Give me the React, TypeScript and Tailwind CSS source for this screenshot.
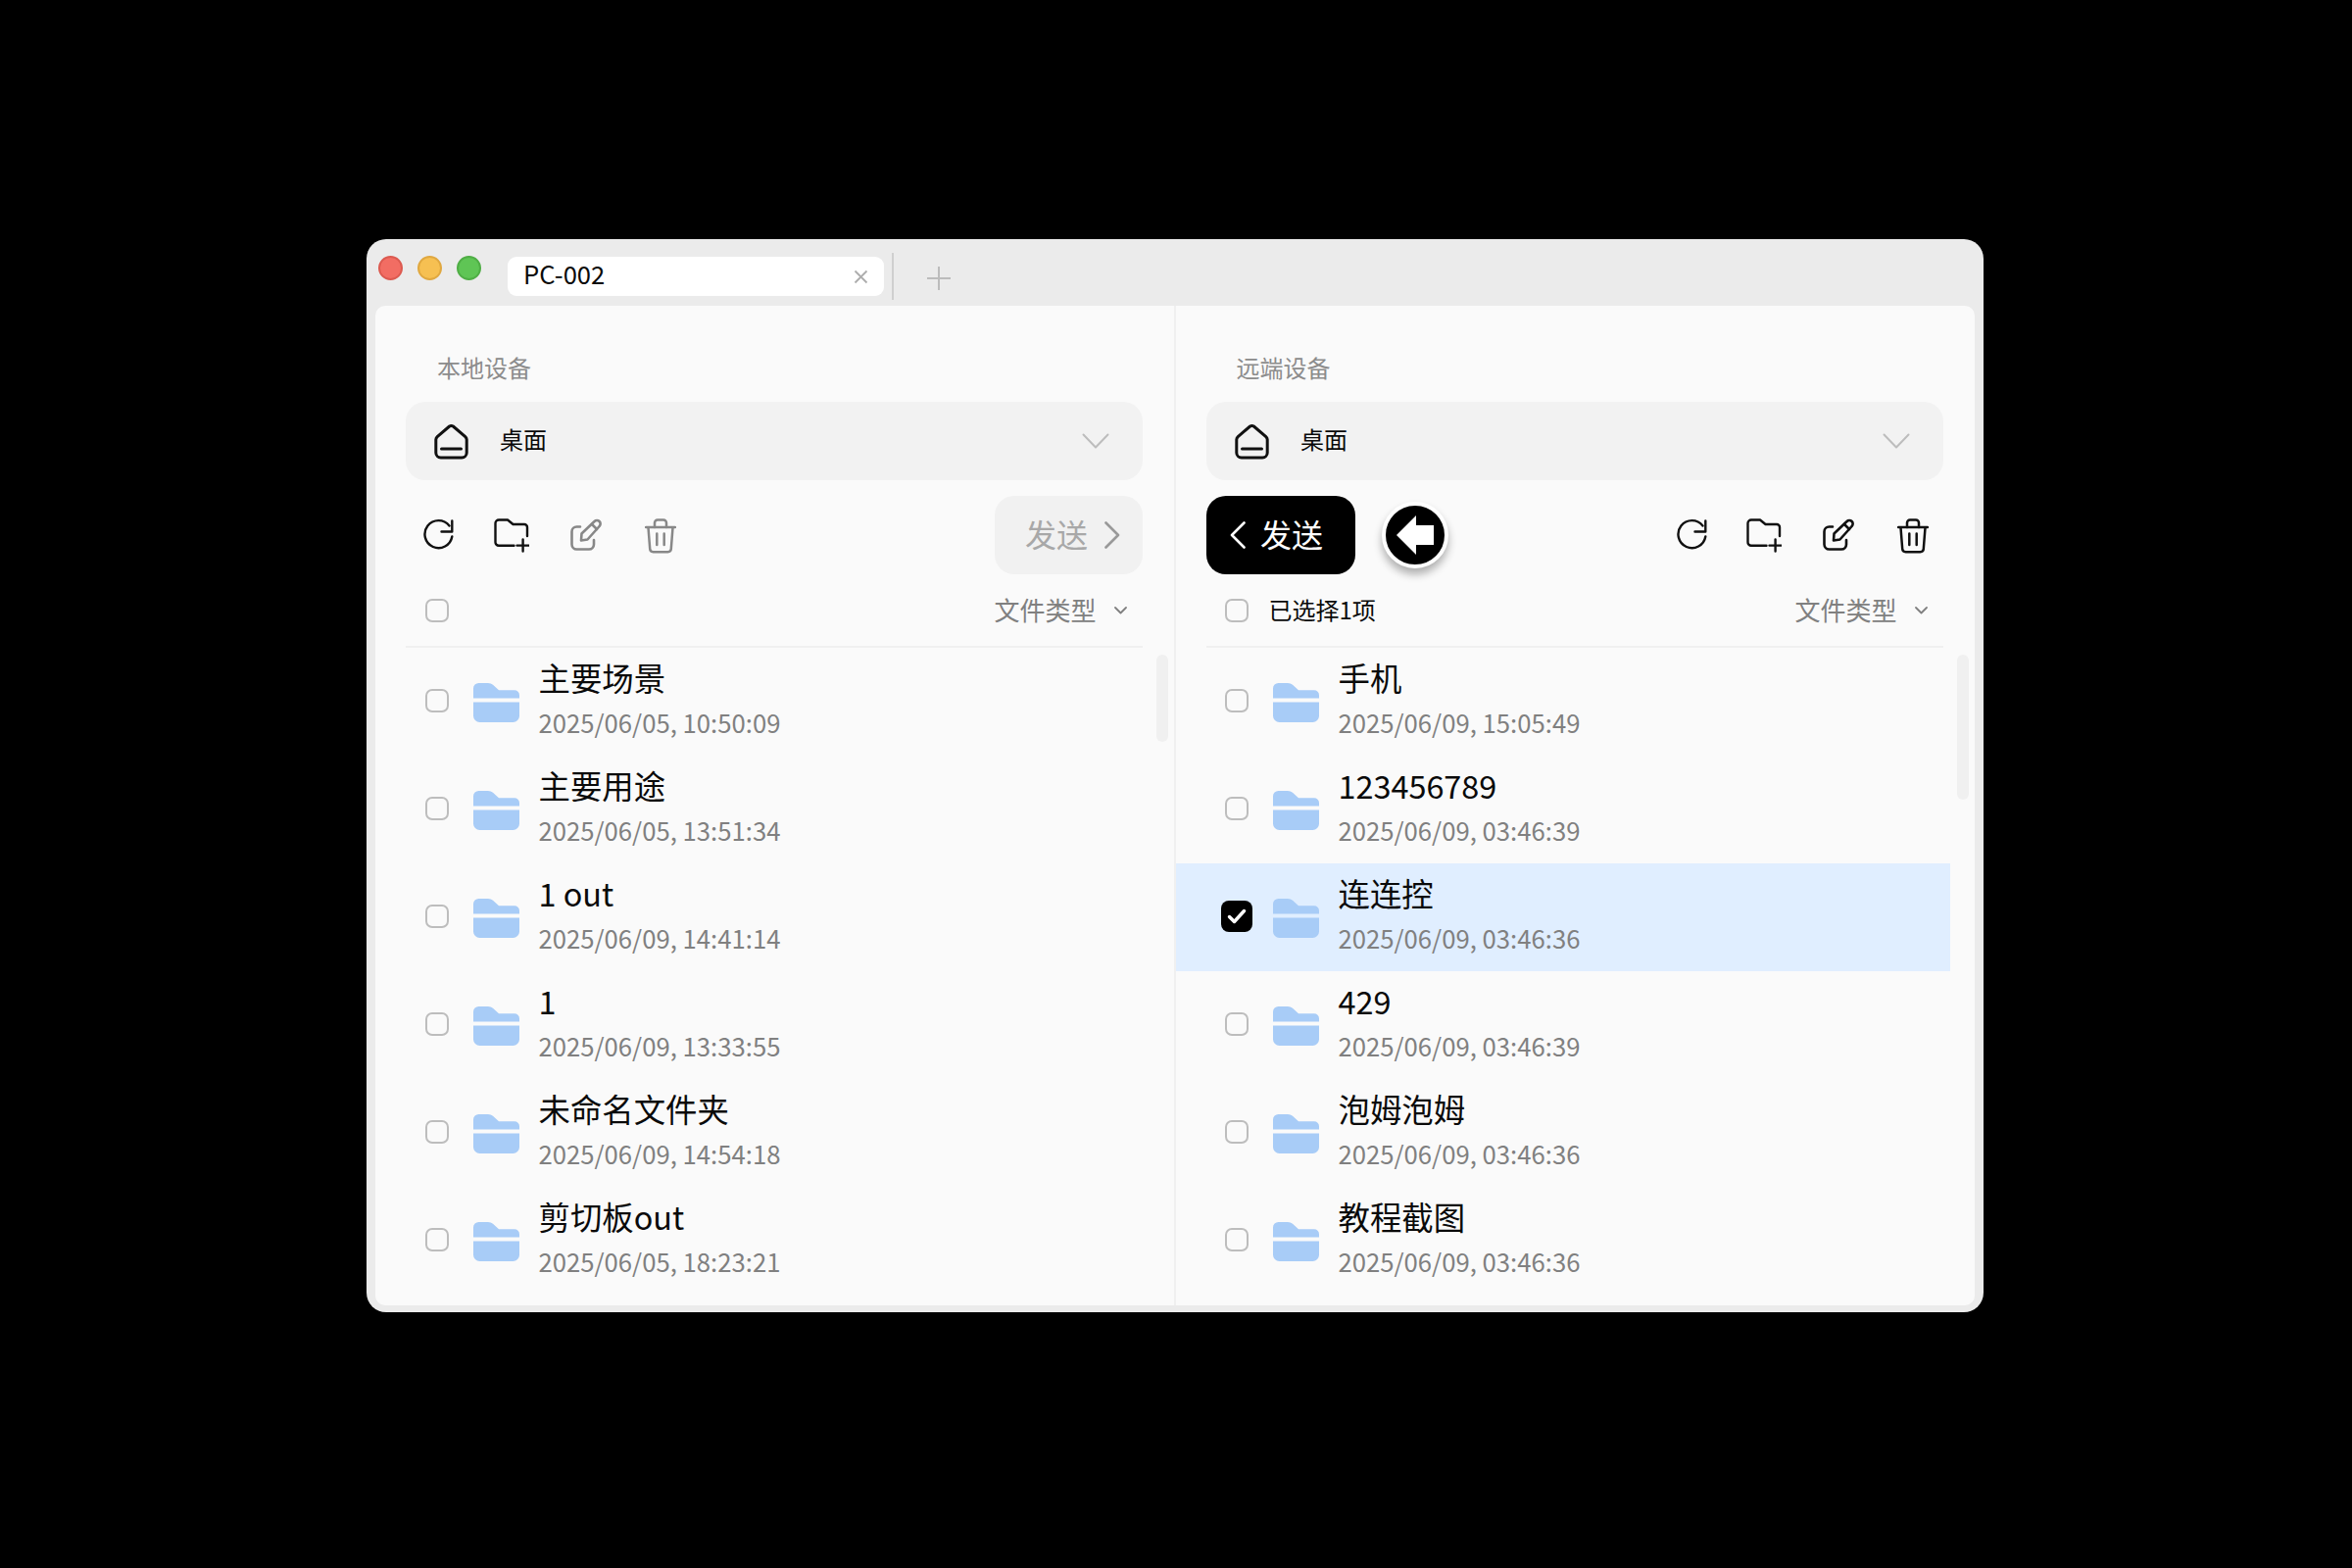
import type { ReactNode } from "react";

type FileItem = { name: string; time: string; checked?: boolean };

const localFiles: FileItem[] = [
  { name: "主要场景", time: "2025/06/05, 10:50:09" },
  { name: "主要用途", time: "2025/06/05, 13:51:34" },
  { name: "1 out", time: "2025/06/09, 14:41:14" },
  { name: "1", time: "2025/06/09, 13:33:55" },
  { name: "未命名文件夹", time: "2025/06/09, 14:54:18" },
  { name: "剪切板out", time: "2025/06/05, 18:23:21" },
];

const remoteFiles: FileItem[] = [
  { name: "手机", time: "2025/06/09, 15:05:49" },
  { name: "123456789", time: "2025/06/09, 03:46:39" },
  { name: "连连控", time: "2025/06/09, 03:46:36", checked: true },
  { name: "429", time: "2025/06/09, 03:46:39" },
  { name: "泡姆泡姆", time: "2025/06/09, 03:46:36" },
  { name: "教程截图", time: "2025/06/09, 03:46:36" },
];

const HomeIcon = () => (
  <svg width="35" height="36" viewBox="0 0 35 36" fill="none" stroke="#111" strokeWidth="3" strokeLinejoin="round" strokeLinecap="round" className="ml-[1px] mt-[1px] shrink-0">
    <path d="M1.8 15.5 Q1.8 14 3.2 12.6 L15.6 2 Q17.5 1 19.4 2 L31.8 12.6 Q33.2 14 33.2 15.5 V29 a5 5 0 0 1 -5 5 H6.8 a5 5 0 0 1 -5 -5 Z" />
    <path d="M7.5 25 H27.5" />
  </svg>
);

const RefreshIcon = ({ color }: { color: string }) => (
  <svg width="32" height="32" viewBox="0 0 32 32" fill="none" stroke={color} strokeWidth="2.4" strokeLinecap="round" strokeLinejoin="round">
    <path d="M27.5 7.5 A14 14 0 1 0 30.3 18.5" />
    <path d="M30.3 2.5 V13.5 H19.5" />
  </svg>
);

const FolderPlusIcon = ({ color }: { color: string }) => (
  <svg width="36" height="35" viewBox="0 0 36 35" fill="none" stroke={color} strokeWidth="2.4" strokeLinecap="round" strokeLinejoin="round" className="-ml-[2px]">
    <path d="M34 18 V9 a3 3 0 0 0 -3 -3 H19.5 L14 1.5 H5 a3.5 3.5 0 0 0 -3.5 3.5 V24 a3.5 3.5 0 0 0 3.5 3.8 H20.5" />
    <path d="M29.6 21.5 V33.5 M23.5 27.6 H35.5" />
  </svg>
);

const EditIcon = ({ color }: { color: string }) => (
  <svg width="33" height="33" viewBox="0 0 33 33" fill="none" stroke={color} strokeWidth="2.6" strokeLinecap="round" strokeLinejoin="round">
    <path d="M10 8.5 H6.5 a5 5 0 0 0 -5 5 V26.5 a5 5 0 0 0 5 5 H19 a5 5 0 0 0 5 -5 V22" />
    <path d="M11 22.5 L11.5 15.5 L24.6 3 a3.5 3.5 0 0 1 5 0 a3.5 3.5 0 0 1 0 5 L17.5 21.5 Z" />
    <path d="M22 6 L27 11" />
  </svg>
);

const TrashIcon = ({ color }: { color: string }) => (
  <svg width="32" height="36" viewBox="0 0 32 36" fill="none" stroke={color} strokeWidth="2.5" strokeLinecap="round" strokeLinejoin="round">
    <path d="M1 9 H31" />
    <path d="M10 9 V4.5 a3 3 0 0 1 3 -3 H19 a3 3 0 0 1 3 3 V9" />
    <path d="M3.5 9.5 L5.2 31 a3.4 3.4 0 0 0 3.4 3.2 H23.4 a3.4 3.4 0 0 0 3.4 -3.2 L28.5 9.5" />
    <path d="M12.3 15.5 V27 M19.7 15.5 V27" />
  </svg>
);

const FolderIcon = () => (
  <svg width="47" height="40" viewBox="0 0 47 40" fill="#a8ccf7" className="shrink-0">
    <path d="M0 15.4 V5.5 a5.5 5.5 0 0 1 5.5 -5.5 H15 q3 0 5 1.8 L26 7.2 H42 a5 5 0 0 1 5 5 V15.4 Z" />
    <path d="M0 19.6 H47 V33.5 a6.5 6.5 0 0 1 -6.5 6.5 H6.5 a6.5 6.5 0 0 1 -6.5 -6.5 Z" />
  </svg>
);

const Chevron = ({ dir, color }: { dir: "left" | "right"; color: string }) => (
  <svg width="16" height="28" viewBox="0 0 16 28" fill="none" stroke={color} strokeWidth="2.6" strokeLinecap="round" strokeLinejoin="round">
    <path d={dir === "left" ? "M14.5 1.5 L2 14 L14.5 26.5" : "M1.5 1.5 L14 14 L1.5 26.5"} />
  </svg>
);

const Checkbox = ({ checked }: { checked?: boolean }) => (
  <div className="w-[32px] h-[32px] flex items-center justify-center shrink-0">
    {checked ? (
      <div className="w-[32px] h-[32px] rounded-[8px] bg-black flex items-center justify-center">
        <svg width="20" height="16" viewBox="0 0 20 16" fill="none" stroke="#fff" strokeWidth="3.4" strokeLinecap="round" strokeLinejoin="round">
          <path d="M2.5 8.5 L7.5 13.5 L17.5 2.5" />
        </svg>
      </div>
    ) : (
      <div className="w-[24px] h-[24px] rounded-[7px] border-2 border-[#bdbdbd]"></div>
    )}
  </div>
);

const FileRow = ({ file, remote }: { file: FileItem; remote?: boolean }) => (
  <div className={`h-[110px] w-[790px] flex items-center ${remote ? "pl-[45.5px]" : "pl-[47px]"} ${file.checked ? "bg-[#e0eeff]" : ""}`}>
    <div className="mb-[2px]">
      <Checkbox checked={file.checked} />
    </div>
    <div className="ml-[21px] mt-[1px]">
      <FolderIcon />
    </div>
    <div className={`h-[110px] ${remote ? "ml-[20px]" : "ml-[19.5px]"}`}>
      <div className="pt-[7.5px] text-[32.4px] leading-[44px] text-[#0a0a0a]">{file.name}</div>
      <div className="mt-[8px] text-[25.7px] leading-[32px] text-[#808080]">{file.time}</div>
    </div>
  </div>
);

const SendButton = ({ active }: { active?: boolean }) =>
  active ? (
    <div className="w-[152px] h-[80px] rounded-[20px] bg-black text-white flex items-center pl-[24px] gap-[15px] text-[32px]">
      <Chevron dir="left" color="#fff" />
      <span className="-mt-[4px]">发送</span>
    </div>
  ) : (
    <div className="w-[151px] h-[80px] rounded-[20px] bg-[#f1f1f1] text-[#a8a8a8] flex items-center pl-[31px] gap-[17px] text-[32px]">
      <span className="-mt-[4px]">发送</span>
      <Chevron dir="right" color="#999" />
    </div>
  );

const ToolIcons = ({ readonly }: { readonly?: boolean }) => {
  const secondary = readonly ? "#888" : "#111";
  return (
    <div className={`flex gap-[9.5px] mt-[1px] ${readonly ? "" : "-mr-[2px]"}`}>
      {[
        <RefreshIcon color="#111" />,
        <FolderPlusIcon color="#111" />,
        <EditIcon color={secondary} />,
        <TrashIcon color={secondary} />,
      ].map((icon: ReactNode, i) => (
        <div key={i} className="w-[66px] flex justify-center">
          {icon}
        </div>
      ))}
    </div>
  );
};

const Panel = ({
  title,
  files,
  remote,
  scrollHeight,
}: {
  title: string;
  files: FileItem[];
  remote?: boolean;
  scrollHeight: string;
}) => (
  <div className="w-[815px] h-full relative">
    <div className="pl-[31px] w-[783px]">
      <div className={`h-[98px] pt-[47px] text-[24px] leading-[32px] text-[#8c8c8c] ${remote ? "pl-[30.5px]" : "pl-[32px]"}`}>{title}</div>
      <div className="h-[80px] rounded-[20px] bg-[#f2f2f2] flex items-center pl-[28px] pr-[34px]">
        <HomeIcon />
        <span className="ml-[32px] text-[24px] text-[#0a0a0a] -mt-[4px]">桌面</span>
        <svg width="28" height="16" viewBox="0 0 28 16" fill="none" stroke="#bdbdbd" strokeWidth="2" className="ml-auto" strokeLinecap="round" strokeLinejoin="round">
          <path d="M1.5 1.5 L14 14.5 L26.5 1.5" />
        </svg>
      </div>
      <div className="mt-[16px] h-[80px] flex items-center justify-between">
        {remote ? (
          <>
            <div className="flex items-center">
              <SendButton active />
              <div className="ml-[27px] w-[68px] h-[68px] rounded-full bg-black border-4 border-white shadow-[0_6px_8px_rgba(0,0,0,0.3)] flex items-center justify-center">
                <svg width="40" height="40" viewBox="0 0 40 40" fill="#fff">
                  <path d="M1 20 L21 0 V10 H39 V30 H21 V40 Z" />
                </svg>
              </div>
            </div>
            <ToolIcons />
          </>
        ) : (
          <>
            <ToolIcons readonly />
            <SendButton />
          </>
        )}
      </div>
      <div className={`h-[75px] flex items-center pr-[16.5px] border-b-2 border-[#f0f0f0] ${remote ? "pl-[14.5px]" : "pl-[16px]"}`}>
        <Checkbox />
        {remote && <span className="ml-[17px] text-[24px] text-[#0a0a0a] -mt-[2px]">已选择1项</span>}
        <span className="ml-auto text-[26px] text-[#808080] -mt-[3px]">文件类型</span>
        <svg width="13" height="8" viewBox="0 0 13 8" fill="none" stroke="#808080" strokeWidth="1.8" className="ml-[18px]" strokeLinecap="round" strokeLinejoin="round">
          <path d="M1 1 L6.5 6.5 L12 1" />
        </svg>
      </div>
    </div>
    <div>
      {files.map((file) => (
        <FileRow key={file.name} file={file} remote={remote} />
      ))}
    </div>
    <div className={`absolute top-[356px] left-[797px] w-[12px] ${scrollHeight} rounded-[6px] bg-[#f0f0f0]`}></div>
  </div>
);

export default function App() {
  return (
    <div
      className="w-[2400px] h-[1600px] bg-black pt-[244px] pl-[374px]"
      style={{ fontFamily: '"Noto Sans CJK SC", "Noto Sans", sans-serif' }}
    >
      <div className="w-[1650px] h-[1095px] rounded-[20px] bg-[#ebebeb] overflow-hidden">
        <div className="h-[68px] flex items-start pl-[11.5px] pt-[17px]">
          <div className="flex gap-[15px]">
            <div className="w-[25px] h-[25px] rounded-full bg-[#f26d63] border-2 border-[#dc5a50]"></div>
            <div className="w-[25px] h-[25px] rounded-full bg-[#f6c052] border-2 border-[#e0a840]"></div>
            <div className="w-[25px] h-[25px] rounded-full bg-[#5fc555] border-2 border-[#4fae45]"></div>
          </div>
          <div className="ml-[27.5px] w-[384px] h-[40px] mt-[1px] rounded-[9px] bg-white flex items-center pl-[16px] pr-[16px]">
            <span className="text-[25.6px] text-[#0a0a0a] -mt-[5px]">PC-002</span>
            <svg width="15" height="15" viewBox="0 0 15 15" fill="none" stroke="#adadad" strokeWidth="1.8" className="ml-auto mt-[1px]">
              <path d="M1.5 1.5 L13.5 13.5 M13.5 1.5 L1.5 13.5" />
            </svg>
          </div>
          <div className="ml-[8px] w-[2px] h-[48px] -mt-[3px] bg-[#cfcfcf]"></div>
          <svg width="26" height="26" viewBox="0 0 26 26" fill="none" stroke="#bcbcbc" strokeWidth="2" className="ml-[33px] mt-[10px]">
            <path d="M13 1 V25 M1 13 H25" />
          </svg>
        </div>
        <div className="mx-[9px] h-[1020px] rounded-[10px] bg-[#fafafa] flex overflow-hidden">
          <Panel title="本地设备" files={localFiles} scrollHeight="h-[89px]" />
          <div className="w-[2px] h-full bg-[#f0f0f0]"></div>
          <Panel title="远端设备" files={remoteFiles} remote scrollHeight="h-[148px]" />
        </div>
      </div>
    </div>
  );
}
